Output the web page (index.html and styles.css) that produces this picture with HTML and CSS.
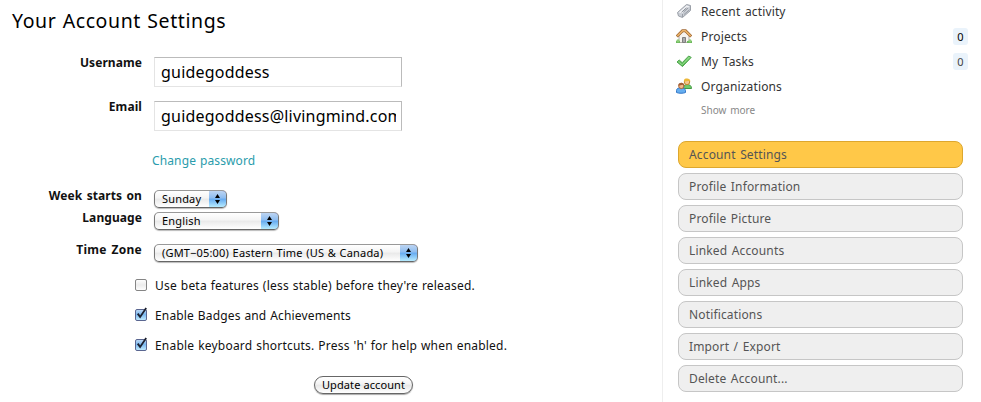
FILE: index.html
```html
<!DOCTYPE html>
<html lang="en">
<head>
<meta charset="utf-8">
<title>Your Account Settings</title>
<link rel="stylesheet" href="styles.css">
</head>
<body>
<svg class="defs" width="0" height="0" aria-hidden="true">
  <defs>
    <linearGradient id="aqua" x1="0" y1="0" x2="0" y2="1"><stop offset="0" stop-color="#c4dcf6"/><stop offset=".45" stop-color="#7ab8f0"/><stop offset="1" stop-color="#c3edff"/></linearGradient>
    <linearGradient id="plain" x1="0" y1="0" x2="0" y2="1"><stop offset="0" stop-color="#fff"/><stop offset=".5" stop-color="#ececec"/><stop offset="1" stop-color="#fff"/></linearGradient>
    <linearGradient id="green" x1="0" y1="0" x2="0" y2="1"><stop offset="0" stop-color="#8fdc83"/><stop offset="1" stop-color="#4cb44a"/></linearGradient>
    <symbol id="checked" viewBox="0 0 15 16"><rect x="1.5" y="3.5" width="11" height="11" rx="1.5" fill="url(#aqua)" stroke="#5a6690"/><path d="M3.7 7.6 6.1 10.9 12.2 2" fill="none" stroke="#1c2130" stroke-width="1.8"/></symbol>
  </defs>
</svg>
<div class="page">
  <main class="content">
    <h1><span class="title">Your Account Settings</span></h1>
    <form>
      <div class="row field"><label class="user">Username</label><input class="text" type="text" value="guidegoddess"></div>
      <div class="row field"><label class="email">Email</label><input class="text" type="text" value="guidegoddess@livingmind.com"></div>
      <div class="password"><a>Change password</a></div>
      <div class="row choice"><label class="week">Week starts on</label><div class="select day"><span>Sunday</span><i><svg width="5" height="10"><path d="M0 4 2.5 0 5 4zM0 6 2.5 10 5 6z"/></svg></i></div></div>
      <div class="row choice lang-row"><label class="lang">Language</label><div class="select lang-select"><span>English</span><i><svg width="5" height="10"><path d="M0 4 2.5 0 5 4zM0 6 2.5 10 5 6z"/></svg></i></div></div>
      <div class="row choice"><label class="zone">Time Zone</label><div class="select zone-select"><span>(GMT−05:00) Eastern Time (US &amp; Canada)</span><i><svg width="5" height="10"><path d="M0 4 2.5 0 5 4zM0 6 2.5 10 5 6z"/></svg></i></div></div>
      <div class="checks">
        <div class="check"><svg width="15" height="16"><rect x="1.5" y="3.5" width="11" height="11" rx="1.5" fill="url(#plain)" stroke="#858585"/></svg><span class="beta">Use beta features (less stable) before they're released.</span></div>
        <div class="check"><svg width="15" height="16"><use href="#checked"/></svg><span class="badges">Enable Badges and Achievements</span></div>
        <div class="check"><svg width="15" height="16"><use href="#checked"/></svg><span class="keys">Enable keyboard shortcuts. Press 'h' for help when enabled.</span></div>
      </div>
      <button type="button"><span>Update account</span></button>
    </form>
  </main>
  <aside>
    <nav class="links">
      <div class="link"><svg width="16" height="16"><path d="M1.5 9.5 10.5 1.5 14.5 2.5V7.5L6.5 14.5 2.5 13z" fill="#c9cdd4" stroke="#9ba0a8"/><path d="M2.7 9.5 10.7 2.5 13.4 3.3 6 10.3z" fill="#f0f1f4"/><path d="M5.5 9.3 10.5 4.8M7.5 9 12 4.8" stroke="#8a9099"/><path d="M6.5 11v3M8 11.5 13.5 6.8" stroke="#999ea6"/></svg><span class="recent">Recent activity</span></div>
      <div class="link"><svg width="16" height="16"><path d="M3 7.5 8 3 13 7.5V14.5H3z" fill="#f5f2ed" stroke="#b5aea8"/><path d="M6.5 9.5h3v5h-3z" fill="#aaa" stroke="#808080"/><path d="M.8 8.5 6.5 2.7h3L15.2 8.5" fill="none" stroke="#a36a35" stroke-width="3"/><path d="M1.3 8 6.7 2.7h2.6L14.7 8" fill="none" stroke="#ecb469" stroke-width="1.6"/><path d="M0 13h4v2H0zM11 13h5v2h-5z" fill="#6bb75c"/><circle cx="2" cy="12.8" r="1.6" fill="#8cce77"/><circle cx="14" cy="12.8" r="1.6" fill="#8cce77"/></svg><span class="projects">Projects</span><b class="count strong">0</b></div>
      <div class="link"><svg width="16" height="16"><path d="M1 9 3.2 7 6.2 9.7 12.7 3 15.2 4.4 6.5 13.5z" fill="url(#green)" stroke="#4ba24b"/><path d="M2.5 8.8 6.2 11.8 13.3 4.5" fill="none" stroke="#91d889"/></svg><span class="tasks">My Tasks</span><b class="count">0</b></div>
      <div class="link"><svg width="16" height="16"><path d="M7.5 10.5c0-3 1-4 3.5-4s4.5 1 4.5 4z" fill="#71c86c" stroke="#459b44"/><circle cx="11" cy="4" r="2.7" fill="#f4c690" stroke="#c58a30"/><path d="M7.8 3.8C7.8 1 9 .5 11 .5s3.5 1 3.3 3.3L12.5 2.8z" fill="#edb839"/><path d="M.5 14.5v-2C.5 10.5 2.4 9.8 5 9.8s4.5 1 4.5 2.9v1.8c-2 1-7 1-9 0z" fill="#65aef0" stroke="#3578c8"/><circle cx="5.3" cy="8" r="2.6" fill="#f2b98b" stroke="#aa6739"/><path d="M2.3 7.8C2.2 5.5 3.5 4.8 5.3 4.8S8.5 5.8 8.3 7.8L6.5 6.7z" fill="#a35f37"/></svg><span class="orgs">Organizations</span></div>
      <div class="more"><span>Show more</span></div>
    </nav>
    <nav class="tabs">
      <a class="tab active"><span>Account Settings</span></a>
      <a class="tab"><span>Profile Information</span></a>
      <a class="tab"><span>Profile Picture</span></a>
      <a class="tab"><span>Linked Accounts</span></a>
      <a class="tab"><span>Linked Apps</span></a>
      <a class="tab"><span>Notifications</span></a>
      <a class="tab"><span>Import / Export</span></a>
      <a class="tab"><span>Delete Account...</span></a>
    </nav>
  </aside>
</div>
</body>
</html>
```
FILE: styles.css
```css
* { box-sizing: border-box; }
body { margin: 0; background: #fff; color: #111; font: 12px/16px "Noto Sans", "Open Sans", sans-serif; letter-spacing: .2px; word-spacing: .6px; }
.defs { display: block; height: 0; }
.page { display: flex; height: 402px; overflow: hidden; white-space: nowrap; }
.content { width: 662px; }
h1 { margin: 0; padding: 8px 0 0 12px; height: 57px; font-size: 19.5px; font-weight: 400; line-height: 26px; letter-spacing: .6px; word-spacing: .6px; color: #000; }
.row { display: grid; grid-template-columns: 142px 1fr; column-gap: 12px; align-items: start; }
.row label { justify-self: end; font-weight: 700; letter-spacing: .08px; word-spacing: 1.2px; }
.row .zone { word-spacing: 1.2px; letter-spacing: .3px; }
.field { height: 44px; }
.field label { margin-top: -2px; }
.text { width: 248px; height: 30px; margin: 0; padding: 0 5px 0 6px; border: 1px solid; border-color: #bbb #bbb #e4e4e4 #e4e4e4; font: 16px "Noto Sans", sans-serif; letter-spacing: .2px; color: #000; background: #fff; outline: 0; }
.password { height: 45px; padding: 8px 0 0 152px; color: #2a9cac; letter-spacing: .13px; }
.choice { height: 22px; }
.choice label { margin-top: -2px; }
.lang-row { height: 32px; }
.select { display: flex; height: 18px; border: 1px solid #777; border-color: #999 #777 #666; border-radius: 5px; overflow: hidden; background: linear-gradient(#fff, #f4f4f4 45%, #e9e9e9 50%, #fff); box-shadow: 0 1px 1px #bbb; font-size: 11px; line-height: 16px; letter-spacing: .17px; word-spacing: .6px; color: #000; }
.select span { flex: 1; padding-left: 7px; }
.select i { display: flex; width: 18px; align-items: center; justify-content: center; margin: -1px -1px -1px 0; border: 1px solid #5078a8; border-top-color: #2b2c9b; border-left: 0; border-radius: 0 5px 5px 0; background: linear-gradient(#bdd5f2, #8cbcf0 45%, #65aaf0 50%, #b7ecff); }
.day { width: 73px; }
.lang-select { width: 125px; }
.zone-select { width: 264px; }
.checks { padding: 12px 0 0 134px; }
.check { display: flex; height: 30px; align-items: flex-start; }
.check svg { margin-top: -2px; }
.check span { margin-left: 6px; }
.check .badges { letter-spacing: .15px; }
button { display: flex; width: 99px; height: 18px; margin: 8px 0 0 314px; padding: 0; justify-content: center; align-items: center; border: 1px solid #666; border-radius: 9px; background: linear-gradient(#fff, #f3f3f3 45%, #e7e7e7 50%, #fff); box-shadow: 0 1px 1px #aaa; font: 11px/16px "Noto Sans", sans-serif; letter-spacing: .1px; color: #000; }
aside { width: 319px; border-left: 1px solid #eee; word-spacing: 1.2px; letter-spacing: .15px; }
.links { height: 141px; padding: 0 13px; color: #333; }
.link { display: flex; height: 25px; padding-top: 3px; }
.link span { margin: 1px 0 0 9px; }
.link b { display: block; width: 15px; height: 17px; margin: 0 0 0 auto; border-radius: 3px; background: #eaf3fb; font: 11px/17px "Noto Sans", sans-serif; text-align: center; color: #444; letter-spacing: 0; }
.link .strong { color: #000; }
.more { padding: 2px 0 0 25px; font-size: 10px; color: #888; letter-spacing: 0; }
.tabs { display: flex; flex-direction: column; gap: 5px; padding-left: 15px; }
.tab { width: 285px; height: 27px; padding: 5px 10px; border: 1px solid #c6c6c6; border-radius: 8px; background: #efefef; color: #555; line-height: 16px; }
.active { border-color: #dda72e; background: #ffc848; }
```
